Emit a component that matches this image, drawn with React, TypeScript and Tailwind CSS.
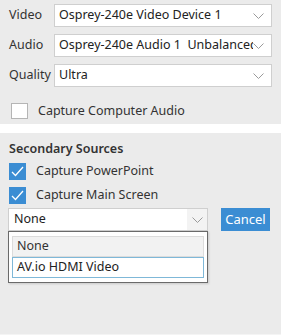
import React from "react";

function Chevron() {
  return (
    <svg width="11" height="6" viewBox="0 0 11 6" className="shrink-0">
      <path d="M0.5 0.5 L5.5 5.5 L10.5 0.5" fill="none" stroke="#9a9a9a" strokeWidth="1" />
    </svg>
  );
}

function Select({ value }: { value: string }) {
  return (
    <div className="flex h-[23px] flex-1 items-center border border-[#cfcfcf] bg-white pl-[4px] pr-[7px] min-w-0">
      <span className="flex-1 overflow-hidden whitespace-pre text-[12.5px] text-[#222]">{value}</span>
      <Chevron />
    </div>
  );
}

function Row({ label, value }: { label: string; value: string }) {
  return (
    <div className="flex items-center">
      <span className="w-[45px] text-[12.5px] text-[#333]">{label}</span>
      <Select value={value} />
    </div>
  );
}

function Check({ label }: { label: string }) {
  return (
    <div className="flex h-[17px] items-center gap-[10px]">
      <div className="flex h-[17px] w-[17px] items-center justify-center bg-[#3b8dd3]">
        <svg width="13" height="11" viewBox="0 0 13 11">
          <path d="M1 6 L4.5 9.5 L12 1" fill="none" stroke="white" strokeWidth="1.3" />
        </svg>
      </div>
      <span className="text-[12.5px] text-[#333]">{label}</span>
    </div>
  );
}

export default function App() {
  return (
    <div
      className="flex h-[335px] w-[281px] flex-col bg-[#ebebeb]"
      style={{ fontFamily: '"Noto Sans", "Open Sans", sans-serif' }}
    >
      <div className="flex flex-col gap-[7px] pl-[9px] pr-[9px] pt-[4px]">
        <Row label="Video" value="Osprey-240e Video Device 1" />
        <Row label="Audio" value="Osprey-240e Audio 1  Unbalanced" />
        <Row label="Quality" value="Ultra" />
        <div className="mt-[9px] flex h-[16px] items-center gap-[10px] pl-[2px]">
          <div className="h-[16px] w-[17px] border border-[#b5b5b5] bg-white" />
          <span className="text-[12.5px] text-[#333]">Capture Computer Audio</span>
        </div>
      </div>
      <div className="mt-[5px] h-[9px] bg-white" />
      <div className="flex flex-1 flex-col border-b border-[#f4f4f4] px-[9px] pt-[7px]">
        <div className="h-[18px] text-[12.5px] font-semibold leading-[18px] text-[#333]">Secondary Sources</div>
        <div className="mt-[5px] flex flex-col gap-[7px]">
          <Check label="Capture PowerPoint" />
          <Check label="Capture Main Screen" />
        </div>
        <div className="relative mt-[4px] flex items-center">
          <div className="ml-[-1px] flex h-[23px] w-[200px] items-center border border-[#cfcfcf] bg-white pl-[5px]">
            <span className="flex-1 text-[12.5px] text-[#222]">None</span>
            <div className="flex h-full w-[20px] items-center justify-center bg-[#f3f3f3]">
              <Chevron />
            </div>
          </div>
          <button className="ml-[13px] h-[23px] w-[49px] bg-[#3b8dd3] text-[13px] text-white">Cancel</button>
          <div className="absolute left-[-1px] top-[23px] w-[200px] border border-[#6a6a6a] bg-white px-[3px] pb-[4px] pt-[4px] shadow-[1px_1px_2px_rgba(0,0,0,0.15)]">
            <div className="flex h-[21px] items-center border border-[#dcdcdc] bg-[#f2f2f2] pl-[4px] text-[12.5px] text-[#333]">None</div>
            <div className="flex h-[21px] items-center border border-[#7fb8d8] bg-white pl-[4px] text-[12.5px] text-[#222]">AV.io HDMI Video</div>
          </div>
        </div>
      </div>
    </div>
  );
}
